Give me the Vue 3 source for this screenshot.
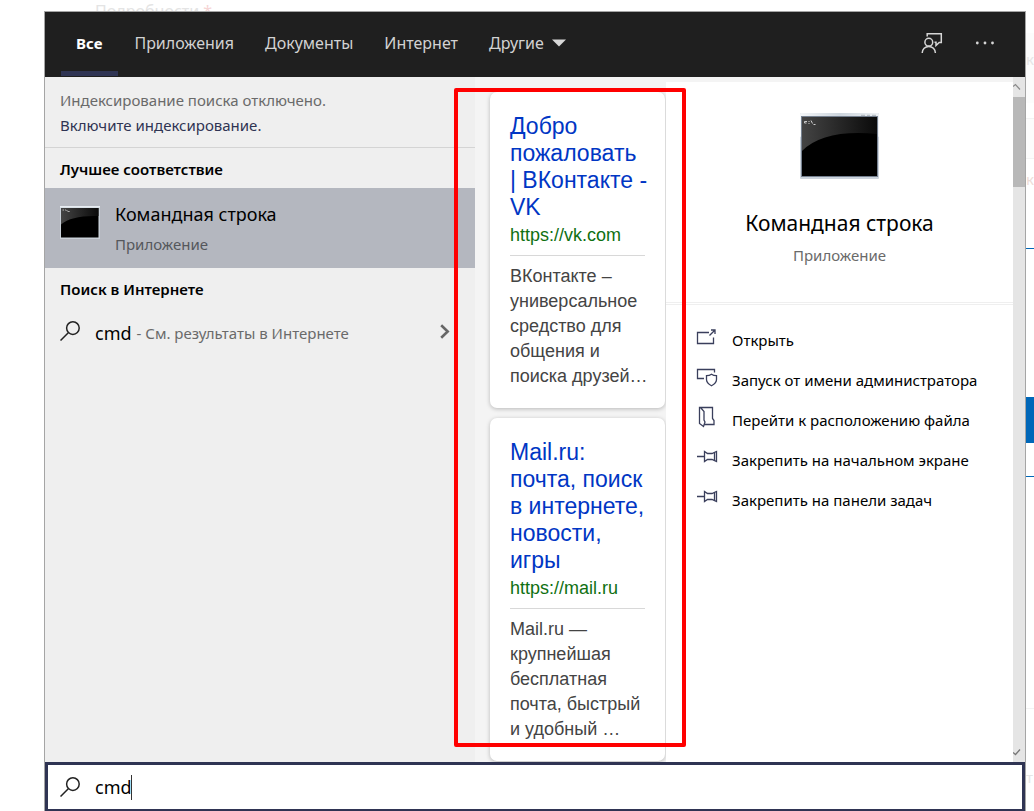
<script setup>
import { ref } from 'vue'

const query = ref('cmd')
const tabs = ['Все', 'Приложения', 'Документы', 'Интернет']
const cards = [
  {
    title: 'Добро пожаловать\n| ВКонтакте - VK',
    url: 'https://vk.com',
    text: 'ВКонтакте – универсальное средство для общения и поиска друзей…',
  },
  {
    title: 'Mail.ru: почта, поиск в интернете, новости, игры',
    url: 'https://mail.ru',
    text: 'Mail.ru — крупнейшая бесплатная почта, быстрый и удобный …',
  },
]
const actions = [
  { icon: 'open', label: 'Открыть' },
  { icon: 'admin', label: 'Запуск от имени администратора' },
  { icon: 'folder', label: 'Перейти к расположению файла' },
  { icon: 'pin', label: 'Закрепить на начальном экране' },
  { icon: 'pin', label: 'Закрепить на панели задач' },
]
</script>

<template>
  <div class="desktop">
    <div class="page-top">Подробности <span class="star">*</span></div>
    <main class="window">
      <header class="header">
        <nav class="tabs">
          <button v-for="(t, i) in tabs" :key="t" type="button" class="tab" :class="{ active: i === 0 }">{{ t }}</button>
          <button type="button" class="tab">
            Другие
            <svg class="caret-down" viewBox="0 0 14 8" width="14" height="8"><path d="M0 0.5H14L7 7.5Z" fill="#d8d8d8" /></svg>
          </button>
        </nav>
        <div class="tools">
          <button type="button" class="tool" aria-label="Отзыв">
            <svg viewBox="0 0 22 22" width="22" height="22" fill="none" stroke="#d6d6d6" stroke-width="1.5">
              <path d="M6.2 4.5V1.8H20.3V10.5H18.2L15 13.5V10.3H13.5" />
              <circle cx="7.8" cy="10.2" r="3.9" />
              <path d="M1.2 21A6.6 6.6 0 0 1 14.4 21" />
            </svg>
          </button>
          <button type="button" class="tool" aria-label="Параметры">
            <svg viewBox="0 0 20 4" width="20" height="4" fill="#d6d6d6">
              <circle cx="2.3" cy="2" r="1.4" /><circle cx="10" cy="2" r="1.4" /><circle cx="17.5" cy="2" r="1.4" />
            </svg>
          </button>
        </div>
      </header>

      <div class="body">
        <section class="results">
          <div class="notice">
            <p>Индексирование поиска отключено.</p>
            <a href="#">Включите индексирование.</a>
          </div>
          <h2 class="group">Лучшее соответствие</h2>
          <button type="button" class="best">
            <svg class="thumb" viewBox="0 0 79 66" width="40" height="33" preserveAspectRatio="none">
              <rect width="79" height="66" fill="#c9d0d8" />
              <rect width="79" height="3" fill="#e8edf2" />
              <rect x="2" y="4" width="74" height="59" fill="#000" />
              <path d="M2 4H76V20Q24 18 2 37Z" fill="url(#gloss)" />
              <path d="M5 8h3M10 8h2M13 8l2 3M16 11h3" stroke="#ddd" stroke-width="1.5" />
            </svg>
            <span class="best-text">
              <span class="best-name">Командная строка</span>
              <span class="best-kind">Приложение</span>
            </span>
          </button>
          <h2 class="group">Поиск в Интернете</h2>
          <button type="button" class="web">
            <svg class="lens" viewBox="0 0 20 20" width="20" height="20" fill="none" stroke="#222" stroke-width="1.5">
              <circle cx="12.9" cy="7.1" r="6.3" /><path d="M8.3 11.7L0.5 19.5" />
            </svg>
            <span class="web-query">cmd</span>
            <span class="web-hint">- См. результаты в Интернете</span>
            <svg class="chev" viewBox="0 0 10 15" width="10" height="15" fill="none" stroke="#666" stroke-width="2.6"><path d="M1.2 1.2L7.7 7.5L1.2 13.8" /></svg>
          </button>
        </section>

        <section class="cards">
          <article v-for="c in cards" :key="c.url" class="card">
            <a href="#" class="card-title">{{ c.title }}</a>
            <p class="card-url">{{ c.url }}</p>
            <p class="card-text">{{ c.text }}</p>
          </article>
        </section>

        <section class="details">
          <div class="hero">
            <svg class="console" viewBox="0 0 79 66" width="79" height="66">
              <defs>
                <linearGradient id="gloss" x1="0" y1="0" x2="1" y2="0">
                  <stop offset="0" stop-color="#444" /><stop offset="1" stop-color="#0a0a0a" />
                </linearGradient>
                <linearGradient id="frame" x1="0" y1="0" x2="1" y2="0">
                  <stop offset="0" stop-color="#f4f6f8" /><stop offset="0.5" stop-color="#cdd5dd" /><stop offset="1" stop-color="#eef1f4" />
                </linearGradient>
              </defs>
              <rect width="79" height="66" rx="1" fill="#cbd3dc" />
              <rect width="79" height="24" rx="1" fill="url(#frame)" />
              <path d="M61 2.300h4M67 2.300h3M72 2.300h4" stroke="#aab2ba" />
              <rect x="1.500" y="3.500" width="76" height="60" fill="#000" stroke="#75808f" />
              <path d="M2 4H77V21Q24 16 2 38Z" fill="url(#gloss)" />
              <path d="M4.500 8.500v1.500h2M4.500 8.500h2.500M9 8v1M9 10v1M11 7.500l1.500 3M13.500 11.500h2" fill="none" stroke="#ccc" />
            </svg>
            <h1>Командная строка</h1>
            <p>Приложение</p>
          </div>
          <ul class="actions">
            <li v-for="a in actions" :key="a.label">
              <button type="button" class="action">
                <svg viewBox="0 0 22 22" width="22" height="22" fill="none" stroke="#3a3f5c" stroke-width="1.3">
                  <g v-if="a.icon === 'open'">
                    <path d="M13 6.500H1.500V17.500H17.500V11.500M13.500 9.500L18.800 4.200M15 4H19V8" />
                  </g>
                  <g v-else-if="a.icon === 'admin'">
                    <path d="M8 12.500H1.500V3.500H18.500V6.500M10.500 9.700Q13.500 9.700 15.500 8.200Q17.500 9.700 20.500 9.700V13.500Q20.500 17 15.500 19.800Q10.500 17 10.500 13.500Z" />
                  </g>
                  <g v-else-if="a.icon === 'folder'">
                    <path d="M4.500 1.500H16.500V12.500L18 14.500V18.500H8.500M4.500 1.500L8 5.500V14L9 16L7.500 20.500L3.500 17.500V1.500Z" />
                  </g>
                  <g v-else>
                    <path d="M1 10.500H8.500M8.500 5.500V15.500L11.500 13.500H16L20.500 15.500V5.500L16 7.500H11.500ZM18.500 6.500V14.500" />
                  </g>
                </svg>
                <span>{{ a.label }}</span>
              </button>
            </li>
          </ul>
        </section>

        <div class="scroll">
          <svg class="arrow" viewBox="0 0 12 20" width="12" height="20" fill="none" stroke="#8a8a8a" stroke-width="1.2"><path d="M0 9.500L2.500 7.500L7 12.500" /></svg>
          <div class="thumb-bar"></div>
          <svg class="arrow down" viewBox="0 0 12 20" width="12" height="20" fill="none" stroke="#777" stroke-width="1.3"><path d="M0 10.500L2.500 12.500L7 7.500" /></svg>
        </div>
        <div class="highlight"></div>
      </div>

      <label class="search">
        <svg class="lens" viewBox="0 0 20 20" width="20" height="20" fill="none" stroke="#222" stroke-width="1.5">
          <circle cx="12.900" cy="7.100" r="6.300" /><path d="M8.300 11.700L0.500 19.500" />
        </svg>
        <input v-model="query" type="text" aria-label="Поиск" />
        <span class="caret"></span>
      </label>
    </main>
    <aside class="page-side">
      <div class="strip tinted">к</div>
      <div class="strip field"></div>
      <div class="strip label">к</div>
      <div class="strip line"></div>
      <div class="strip blue"></div>
      <div class="strip rule"></div>
      <div class="strip divider"></div>
      <div class="strip rest">т</div>
    </aside>
  </div>
</template>

<style>
body {
  margin: 0;
  background: #fff;
}
</style>

<style scoped>
* {
  box-sizing: border-box;
}
p,
h1,
h2,
ul {
  margin: 0;
  padding: 0;
  list-style: none;
}
button {
  border: 0;
  background: none;
  padding: 0;
  font: inherit;
  color: inherit;
  text-align: left;
}
a {
  text-decoration: none;
}
.desktop {
  display: grid;
  grid-template-columns: 1fr 8px;
  grid-template-rows: 11px 1fr;
  height: 100vh;
  padding-left: 44px;
  overflow: hidden;
  font: 15px/20px "Noto Sans", "Open Sans", sans-serif;
  color: #111;
}
.page-top {
  padding-left: 51px;
  overflow: hidden;
  font-size: 16px;
  line-height: 22px;
  color: #e4e4e4;
}
.star {
  color: #f6d5d5;
}
.window {
  grid-row: 2;
  display: flex;
  flex-direction: column;
  min-height: 0;
  border: 1px solid #a5a5a5;
  border-bottom: 0;
}
.header {
  flex: none;
  height: 65px;
  display: flex;
  justify-content: space-between;
  padding: 0 30px 0 16px;
  background: #1f1f1f;
  color: #d2d2d2;
}
.tabs {
  display: flex;
  font-size: 16px;
}
.tab {
  display: flex;
  align-items: center;
  gap: 8px;
  padding: 0 16px 0 15px;
  border-top: 3px solid transparent;
  border-bottom: 5px solid transparent;
  margin-bottom: 1px;
}
.tab.active {
  margin-right: 1px;
  border-bottom-color: #2f3453;
  color: #fff;
  font-size: 15px;
  font-weight: 700;
}
.tools {
  display: flex;
  align-items: center;
  gap: 32px;
  padding-bottom: 3px;
}
.tool {
  display: flex;
}
.body {
  position: relative;
  flex: 1;
  min-height: 0;
  display: grid;
  grid-template-columns: 430px 191px 1fr 12px;
  background: #f4f4f4;
}
.results {
  background: #efefef;
}
.notice {
  padding: 11px 15px 9px;
  border-bottom: 1px solid #d4d4d4;
  line-height: 25px;
  color: #6a6a6a;
}
.notice a {
  color: #2f3453;
}
.group {
  padding: 11px 15px 9px;
  font-size: 15px;
  line-height: 20px;
  font-weight: 600;
  color: #000;
}
.best {
  width: 100%;
  height: 80px;
  display: flex;
  align-items: flex-start;
  gap: 15px;
  padding: 14px 15px 0;
  background: #b4b7bf;
}
.thumb {
  margin-top: 4px;
}
.best-text {
  display: flex;
  flex-direction: column;
  gap: 8px;
}
.best-name,
.web-query {
  font-size: 18px;
  line-height: 24px;
  color: #000;
}
.best-kind {
  color: #55575c;
}
.web {
  width: 100%;
  height: 50px;
  display: flex;
  align-items: center;
  padding: 0 25px 0 15px;
}
.web .lens,
.chev {
  margin-bottom: 4px;
}
.web-query {
  margin-left: 15px;
}
.web-hint {
  margin-left: 5px;
  color: #6a6a6a;
}
.chev {
  margin-left: auto;
}
.cards {
  display: flex;
  flex-direction: column;
  gap: 10px;
  padding: 15px 1px 0 15px;
  overflow: hidden;
  font-family: "Liberation Sans", Arial, sans-serif;
}
.card {
  flex: none;
  padding: 21px 14px 19px 20px;
  border-radius: 7px;
  background: #fff;
  box-shadow: 0 1px 4px rgba(0, 0, 0, 0.25);
}
.card-title {
  display: block;
  margin-bottom: 1px;
  font-size: 23px;
  line-height: 27px;
  white-space: pre-line;
  color: #0036c4;
}
.card-url {
  margin: 0 6px 8px 0;
  padding-bottom: 6px;
  border-bottom: 1px solid #d8d8d8;
  font-size: 18px;
  line-height: 27px;
  color: #0f7012;
}
.card-text {
  font-size: 18px;
  line-height: 25px;
  color: #444;
}
.details {
  margin-top: 5px;
  background: #fff;
}
.hero {
  display: flex;
  flex-direction: column;
  align-items: center;
  padding: 31px 0 37px;
  border-bottom: 3px double #efefef;
}
.hero h1 {
  margin-top: 28px;
  font-size: 21px;
  line-height: 32px;
  font-weight: 400;
  color: #000;
}
.hero p {
  margin-top: 6px;
  color: #6a6a6a;
}
.actions {
  padding: 15px 30px;
}
.action {
  display: flex;
  align-items: center;
  gap: 14px;
  height: 40px;
  width: 100%;
  white-space: nowrap;
  color: #000;
}
.action svg {
  flex: none;
  margin-bottom: 6px;
}
.scroll {
  display: flex;
  flex-direction: column;
  background: #e5e5e5;
}
.thumb-bar {
  height: 90px;
  background: #b8b8b8;
}
.arrow.down {
  margin-top: auto;
}
.highlight {
  position: absolute;
  left: 409px;
  top: 11px;
  width: 232px;
  bottom: 15px;
  border: 4px solid #f00;
  border-radius: 2px;
  pointer-events: none;
}
.search {
  flex: none;
  height: 49px;
  display: flex;
  align-items: center;
  padding: 0 12px;
  border: 3px solid #2f3453;
  border-bottom-width: 2px;
  background: #fff;
}
.search input {
  width: 36px;
  margin-left: 15px;
  padding: 0;
  border: 0;
  outline: 0;
  background: none;
  font: inherit;
  font-size: 18px;
  line-height: 24px;
  color: #000;
}
.caret {
  width: 1px;
  height: 25px;
  background: #333;
}
.page-side {
  grid-column: 2;
  grid-row: 1 / 3;
  display: flex;
  flex-direction: column;
}
.strip {
  flex: none;
  overflow: hidden;
  color: #e6e6e6;
}
.tinted {
  height: 70px;
  margin-top: 33px;
  padding-top: 16px;
  background: #fcfcfc;
}
.field {
  height: 41px;
  margin-top: 15px;
  border-top: 1px solid #f3f3f3;
  border-bottom: 1px solid #f3f3f3;
  background: #fcfcfc;
}
.label {
  height: 40px;
  padding-top: 10px;
  color: #eeddd8;
}
.line {
  height: 50px;
  border-bottom: 1px solid #0067b8;
}
.blue {
  height: 46px;
  margin-top: 148px;
  background: #0067b8;
}
.rule {
  height: 34px;
  border-bottom: 1px solid #0067b8;
}
.divider {
  height: 232px;
  border-bottom: 1px solid #f3f3f3;
}
.rest {
  flex: 1;
  padding-top: 58px;
}
</style>
